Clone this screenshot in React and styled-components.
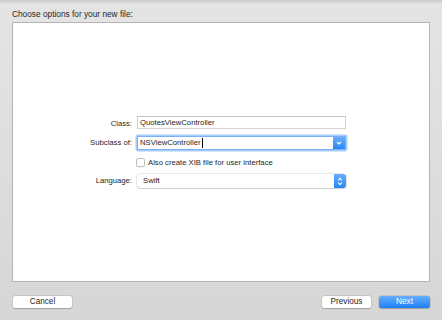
import React from 'react'
import styled, { createGlobalStyle } from 'styled-components'

const Global = createGlobalStyle`
  html, body {
    margin: 0;
    padding: 0;
  }
  body {
    font-family: "Liberation Sans", Arial, sans-serif;
    color: #262626;
  }
`

const Sheet = styled.div`
  width: 442px;
  height: 320px;
  box-sizing: border-box;
  display: flex;
  flex-direction: column;
  background: linear-gradient(#c9c9c9 0px, #e4e4e4 4px, #e3e3e3 40px, #d6d6d6 320px);
  padding: 9px 12px 0 12px;
`

const Title = styled.div`
  font-size: 8.3px;
  line-height: 10px;
  height: 10px;
  margin-bottom: 3px;
`

const Panel = styled.div`
  height: 260px;
  box-sizing: border-box;
  background: #fff;
  border: 1px solid #b4b4b4;
  padding-top: 94px;
`

const Form = styled.div`
  display: grid;
  grid-template-columns: 119px 209px;
  grid-auto-rows: 14px;
  column-gap: 5px;
  row-gap: 5px;
  font-size: 7.7px;
  align-items: center;
`

const Label = styled.div`
  text-align: right;
  line-height: 14px;
`

const TextField = styled.div`
  height: 13px;
  box-sizing: border-box;
  border: 1px solid #d2d2d2;
  border-top-color: #c4c4c4;
  background: #fff;
  padding-left: 2px;
  line-height: 11px;
  align-self: start;
  margin-top: -1px;
`

const Combo = styled.div`
  height: 14px;
  box-sizing: border-box;
  display: flex;
  background: #fff;
  border: 1px solid #7db0f2;
  box-shadow: 0 0 0 1.5px rgba(95, 160, 245, 0.55);
  border-radius: 1px;
`

const ComboText = styled.div`
  flex: 1;
  padding-left: 2px;
  line-height: 12px;
  display: flex;
  align-items: center;
`

const Caret = styled.span`
  display: inline-block;
  width: 1px;
  height: 10px;
  background: #000;
  margin-left: 1px;
`

const BlueKnob = styled.div`
  width: 12px;
  display: flex;
  align-items: center;
  justify-content: center;
  background: linear-gradient(#69aefb, #2a86f6);
  border-radius: ${p => (p.$round ? '0 3px 3px 0' : '0')};
`

const CheckRow = styled.label`
  display: flex;
  align-items: center;
  gap: 3px;
  margin-left: -1px;
`

const Box = styled.span`
  width: 9px;
  height: 9px;
  box-sizing: border-box;
  border: 1px solid #c0c0c0;
  border-radius: 2px;
  background: #fff;
  box-shadow: 0 0.5px 0 rgba(0, 0, 0, 0.08);
`

const Popup = styled.div`
  height: 14px;
  box-sizing: border-box;
  display: flex;
  background: #fff;
  border-radius: 3px;
  box-shadow: 0 0 0 0.5px rgba(0, 0, 0, 0.18), 0 1px 1px rgba(0, 0, 0, 0.12);
`

const PopupText = styled.div`
  flex: 1;
  padding-left: 6px;
  line-height: 14px;
`

const Footer = styled.div`
  display: flex;
  align-items: center;
  margin-top: 14px;
  gap: 8px;
`

const Spacer = styled.div`
  flex: 1;
`

const Button = styled.button`
  width: ${p => p.$w}px;
  height: 12px;
  padding: 0;
  border: none;
  border-radius: 2px;
  font-family: "Liberation Sans", Arial, sans-serif;
  font-size: 8.2px;
  line-height: 12px;
  color: ${p => (p.$primary ? '#fff' : '#262626')};
  background: ${p => (p.$primary ? 'linear-gradient(#66aefb, #1f80f6)' : '#fff')};
  box-shadow: 0 0 0 0.5px rgba(0, 0, 0, 0.12), 0 0.5px 1px rgba(0, 0, 0, 0.2);
  margin-left: ${p => p.$ml || 0}px;
`

const Chevron = () => (
  <svg width="6" height="4" viewBox="0 0 6 4">
    <path d="M1 1 L3 3 L5 1" fill="none" stroke="#fff" strokeWidth="1.1" />
  </svg>
)

const UpDown = () => (
  <svg width="6" height="9" viewBox="0 0 6 9">
    <path d="M1.2 3.4 L3 1.4 L4.8 3.4 M1.2 5.6 L3 7.6 L4.8 5.6" fill="none" stroke="#fff" strokeWidth="1.1" />
  </svg>
)

const App = () => {
  return (
    <Sheet>
      <Global />
      <Title>Choose options for your new file:</Title>
      <Panel>
        <Form>
          <Label>Class:</Label>
          <TextField>QuotesViewController</TextField>

          <Label>Subclass of:</Label>
          <Combo>
            <ComboText>NSViewController<Caret /></ComboText>
            <BlueKnob><Chevron /></BlueKnob>
          </Combo>

          <div />
          <CheckRow>
            <Box />
            <span>Also create XIB file for user interface</span>
          </CheckRow>

          <Label>Language:</Label>
          <Popup>
            <PopupText>Swift</PopupText>
            <BlueKnob $round><UpDown /></BlueKnob>
          </Popup>
        </Form>
      </Panel>
      <Footer>
        <Button $w={59} $ml={1}>Cancel</Button>
        <Spacer />
        <Button $w={49}>Previous</Button>
        <Button $w={51} $primary>Next</Button>
      </Footer>
    </Sheet>
  )
}

export default App
